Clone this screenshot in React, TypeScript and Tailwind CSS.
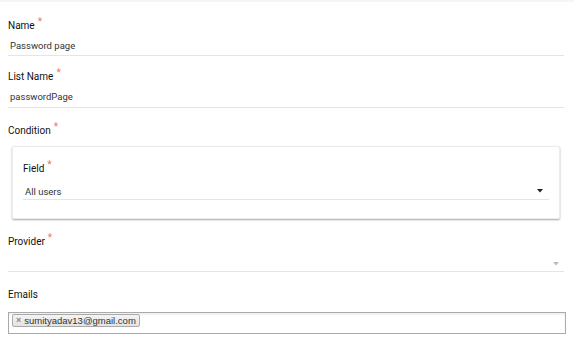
import React from "react";

const Req = () => (
  <span className="ml-[3px] relative top-[-4px] text-[10px] text-[#e87575]">*</span>
);

const Label = ({ children, req = true }: { children: React.ReactNode; req?: boolean }) => (
  <div className="h-[14px] leading-[14px] text-[10px] font-normal text-[#111]">
    {children}
    {req && <Req />}
  </div>
);

const Caret = ({ color }: { color: string }) => (
  <svg width="6" height="4" viewBox="0 0 6 4" className="shrink-0">
    <path d="M0 0 L6 0 L3 3.5 Z" fill={color} />
  </svg>
);

export default function App() {
  return (
    <div className="w-[574px] h-[347px] bg-white overflow-hidden" style={{ fontFamily: "Roboto, 'Liberation Sans', sans-serif" }}>
      <div className="h-[2px] bg-[#f5f5f5]" />
      <div className="pl-2 pr-[10px]">
        <div className="mt-[17px]">
          <Label>Name</Label>
          <div className="mt-[6px] pl-[2px] pb-[2px] border-b border-[#e5e5e5] h-[17px] leading-[14px] text-[9.5px] text-[#333]">
            Password page
          </div>
        </div>
        <div className="mt-[14px]">
          <Label>List Name</Label>
          <div className="mt-[6px] pl-[2px] pb-[3px] border-b border-[#e5e5e5] h-[18px] leading-[14px] text-[9.5px] text-[#333]">
            passwordPage
          </div>
        </div>
        <div className="mt-[16px]">
          <Label>Condition</Label>
        </div>
        <div className="mt-[8px] ml-1 mr-[4px] border border-[#ececec] rounded-[2px] shadow-[0_1px_2px_rgba(0,0,0,0.35)] pt-[15px] pb-[18px] px-[10px]">
          <Label>Field</Label>
          <div className="mt-[8px] pl-[2px] pb-[1px] border-b border-[#e5e5e5] h-[16px] leading-[14px] text-[9.5px] text-[#333] flex items-center justify-between pr-[6px]">
            <span className="relative top-[1px]">All users</span>
            <Caret color="#222" />
          </div>
        </div>
        <div className="mt-[16px]">
          <Label>Provider</Label>
          <div className="h-[23px] border-b border-[#e5e5e5] flex items-end justify-end pb-[5px] pr-[5px]">
            <Caret color="#bbb" />
          </div>
        </div>
        <div className="mt-[16px]">
          <Label req={false}>Emails</Label>
          <div className="mt-[10px] mr-[-2px] h-[22px] border border-[#aaa] shadow-[inset_0_2px_2px_rgba(0,0,0,0.06)] flex items-start pt-[1px] pl-[3px]">
            <div
              className="h-[13px] flex items-center pl-[3px] pr-[3px] border border-[#aaa] rounded-[2px] bg-gradient-to-b from-[#f4f4f4] to-[#e3e3e3] text-[9.5px] leading-[11px] text-[#333]"
              style={{ fontFamily: "'Liberation Sans', Arial, sans-serif" }}
            >
              <span className="text-[9px] text-[#888] mr-[3px] font-bold">×</span>
              <span>sumityadav13@gmail.com</span>
            </div>
          </div>
        </div>
      </div>
    </div>
  );
}
